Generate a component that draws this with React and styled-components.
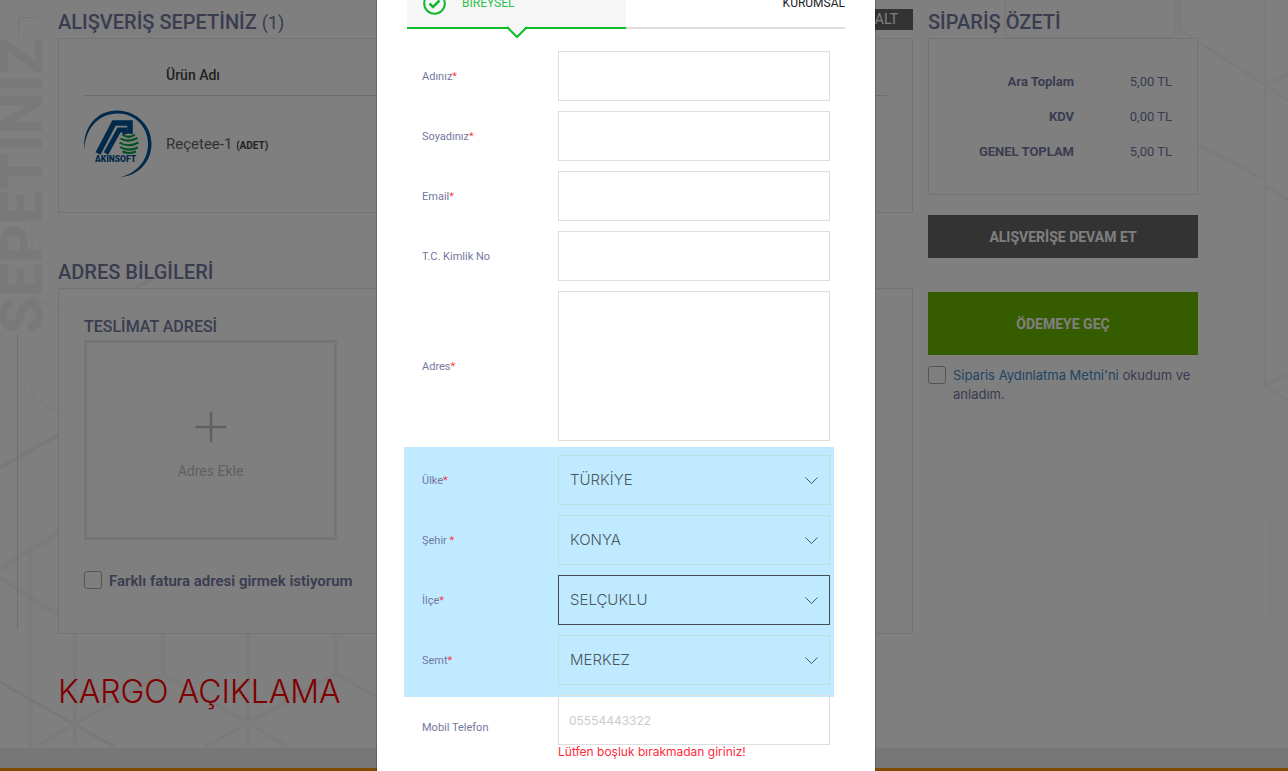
import React, { useState } from 'react'
import styled, { createGlobalStyle, css } from 'styled-components'

const titleFont = `Roboto, "Noto Sans", sans-serif`
const bodyFont = `Inter, "Open Sans", sans-serif`

const GlobalStyle = createGlobalStyle`
    *, *::before, *::after {
        box-sizing: border-box;
    }
    body {
        margin: 0;
        overflow: hidden;
        background: #fff;
        color: #7478a0;
        font-family: ${titleFont};
        font-size: 14px;
    }
    h2, h3, p {
        margin: 0;
    }
    button, input, select, textarea {
        font: inherit;
        border-radius: 0;
    }
`

/* ---------- page ---------- */

const Page = styled.div`
    position: relative;
    min-height: 100vh;
    padding-right: 32px;
    background: #fefefe;
`

const Pattern = styled.svg`
    position: absolute;
    top: 0;
    left: 0;
    width: 100%;
    height: 747px;
    fill: none;
    stroke: #f7f7f7;
`

const SideLabel = styled.div`
    position: absolute;
    top: 38px;
    left: -14px;
    writing-mode: vertical-rl;
    transform: rotate(180deg);
    color: #f3f3f3;
    font-size: 60px;
    line-height: 72px;
    font-weight: 800;
`

const SideCorner = styled.span`
    position: absolute;
    top: 17px;
    left: 18px;
    width: 20px;
    height: 20px;
    border: solid #ececec;
    border-width: 1px 0 0 1px;
`

const SideLine = styled.span`
    position: absolute;
    top: 334px;
    left: 17px;
    width: 1px;
    height: 296px;
    background: #dcdcdc;
`

const Container = styled.div`
    position: relative;
    display: grid;
    grid-template-columns: minmax(0, 1fr) 270px;
    gap: 15px;
    max-width: 1140px;
    margin: 0 auto;
`

const SectionHead = styled.div`
    display: flex;
    align-items: center;
    justify-content: space-between;
    height: 38px;
    margin-top: ${({ $spaced }) => ($spaced ? '37px' : '0')};
`

const SectionTitle = styled.h2`
    padding-top: 6px;
    font-size: 20px;
    line-height: 28px;
    font-weight: 500;

    span {
        font-size: 18px;
        font-weight: 400;
    }
`

const EmptyButton = styled.button`
    height: 21px;
    padding: 0 15px;
    border: 0;
    background: #666;
    color: #fff;
    line-height: 21px;
`

const Card = styled.section`
    padding: 25px;
    border: 1px solid #e6e6e6;
    background: #fff;
`

const ProductTable = styled.table`
    width: 100%;
    border-collapse: collapse;
    color: #666;
    text-align: left;

    th {
        height: 31px;
        padding: 0 0 8px;
        border-bottom: 1px solid #ddd;
        color: #444;
        font-weight: 500;
    }
    td {
        height: 92px;
        padding: 6px 0 0;
        font-size: 15px;
    }
    th:first-child, td:first-child {
        width: 82px;
    }
    small {
        color: #444;
        font-size: 10px;
        font-weight: 700;
    }
    svg {
        display: block;
    }
`

const AddressCard = styled(Card)`
    padding-bottom: 42px;
`

const AddressTitle = styled.h3`
    font-size: 16px;
    line-height: 26px;
    font-weight: 500;
`

const AddAddress = styled.button`
    display: flex;
    flex-direction: column;
    align-items: center;
    justify-content: center;
    gap: 18px;
    width: 253px;
    max-width: 100%;
    height: 200px;
    padding: 12px 0 0;
    border: 3px solid #ebebeb;
    background: transparent;
    color: #c2c2c2;
    line-height: 20px;
`

const CheckLabel = styled.label`
    display: flex;
    align-items: flex-start;
    gap: 7px;
    ${({ $billing }) =>
        $billing
            ? css`
                  margin-top: 31px;
                  font-size: 15px;
                  line-height: 20px;
                  font-weight: 600;
              `
            : css`
                  margin-top: 11px;
                  font-family: ${bodyFont};
                  font-size: 13px;
                  line-height: 19px;
              `}
    a {
        color: #428bca;
        text-decoration: none;
    }
`

const Check = styled.input`
    appearance: none;
    flex: none;
    width: 18px;
    height: 18px;
    margin: 0;
    border: 1px solid #a8a8a8;
    border-radius: 3px;
    background: #fff;
`

const CargoTitle = styled.p`
    margin: 38px 0 36px;
    color: #f00;
    font-family: ${bodyFont};
    font-size: 32px;
    line-height: 40px;
    font-weight: 300;
`

const SummaryTable = styled.table`
    width: 100%;
    border-collapse: collapse;
    font-size: 13px;
    text-align: right;

    th, td {
        height: 35px;
        padding: 0;
    }
    th {
        font-weight: 700;
    }
    td {
        width: 98px;
    }
`

const WideButton = styled.button`
    display: block;
    width: 100%;
    height: ${({ $primary }) => ($primary ? '63px' : '43px')};
    margin-top: ${({ $primary }) => ($primary ? '34px' : '20px')};
    border: 0;
    background: ${({ $primary }) => ($primary ? '#6cb800' : '#666')};
    color: #fff;
    font-weight: 700;
`

const Footer = styled.footer`
    position: relative;
    height: 60px;
    margin-right: -32px;
    border-top: 20px solid #eee;
    background: #ff9600;
`

/* ---------- modal ---------- */

const Overlay = styled.div`
    position: fixed;
    inset: 0;
    display: flex;
    justify-content: center;
    align-items: flex-start;
    padding-right: 36px;
    overflow: hidden;
    background: rgba(0, 0, 0, 0.5);
`

/* scrolled a little, so the head of the dialog is above the window */
const Dialog = styled.div`
    width: 500px;
    max-width: 100%;
    margin-top: -53px;
    padding: 29px 30px 60px;
    border: 1px solid rgba(0, 0, 0, 0.2);
    background: #fff;
    background-clip: padding-box;
`

const Tabs = styled.div`
    display: grid;
    grid-template-columns: 1fr 1fr;
`

const Tab = styled.button`
    position: relative;
    display: flex;
    align-items: center;
    justify-content: ${({ $active }) => ($active ? 'flex-start' : 'flex-end')};
    gap: 16px;
    height: 52px;
    padding: 2px 0 0 16px;
    border: 0;
    border-bottom: 2px solid ${({ $active }) => ($active ? '#0cbf2a' : '#ddd')};
    background: ${({ $active }) => ($active ? '#f6f6f6' : '#fff')};
    color: ${({ $active }) => ($active ? '#2dc24a' : '#222')};
    font-size: 12px;
`

const TabArrow = styled.svg`
    position: absolute;
    top: 49px;
    left: calc(50% - 11px);
`

const Form = styled.form`
    display: flex;
    flex-direction: column;
    gap: 10px;
    padding: 22px 15px 0;
`

const Row = styled.div`
    display: grid;
    grid-template-columns: 1fr 2fr;
    align-items: center;
`

const Label = styled.label`
    padding-top: 2px;
    font-size: 11px;
    line-height: 18px;

    span {
        color: #f00;
        font-weight: 300;
    }
`

const fieldStyle = css`
    display: block;
    width: 100%;
    height: 50px;
    padding: 0 10px;
    border: 1px solid #ddd;
    outline: 0;
    background: transparent;
    font-family: ${bodyFont};
`

const Input = styled.input`
    ${fieldStyle}
    font-size: 12px;

    &::placeholder {
        color: #ccc;
    }
`

const TextArea = styled.textarea`
    ${fieldStyle}
    height: 150px;
    resize: none;
`

const RegionGroup = styled.div`
    display: flex;
    flex-direction: column;
    gap: 10px;
    margin: -4px -4px -12px -18px;
    padding: 8px 4px 12px 18px;
    background: #bfeaff;
`

const SelectWrap = styled.div`
    position: relative;

    svg {
        position: absolute;
        top: 21px;
        right: 12px;
        pointer-events: none;
    }
`

const Select = styled.select`
    ${fieldStyle}
    appearance: none;
    padding: 0 11px 1px;
    border-color: ${({ $focused }) => ($focused ? '#444c50' : '#bbdfdc')};
    color: #4c565c;
    font-size: 15px;
    font-weight: 300;
`

const Hint = styled.p`
    color: #ff2a3a;
    font-family: ${bodyFont};
    font-size: 12px;
    line-height: 14px;
`

const Logo = () => (
    <svg width="68" height="68" viewBox="0 0 68 68" role="img" aria-label="AKINSOFT">
        <path
            d="M0.5 40 C-2 20 11 0.5 33 0.5 C52 0.5 67.5 15 67.5 34 C67.5 52 54 66 35 67.5 C52 64 64 51 64 34 C64 17 51 3.5 34 3.5 C15 3.5 1 18 0.5 40 Z"
            fill="#005294"
        />
        <g fill="none" stroke="#005294" strokeWidth="5">
            <path d="M14 43.5 L30 13 H46 V24" strokeWidth="5.500" />
            <path d="M22 43.5 L35 20 H41 V27" />
        </g>
        <circle cx="45" cy="33.5" r="10" fill="#fff" />
        <g fill="none" stroke="#00a045" strokeWidth="2">
            <path d="M39 25 Q45 29 51 24.5" />
            <path d="M36.5 28.5 Q44 33 53.5 28" />
            <path d="M35.5 32.5 Q44 38 54.5 32.5" />
            <path d="M36 37 Q44 42 54 37.5" />
            <path d="M38.5 41.5 Q45 44.500 52 41.5" />
        </g>
        <text x="11" y="52" fill="#005294" fontSize="8.500" fontWeight="900">
            AKINSOFT
        </text>
    </svg>
)

const Hexagons = () => (
    <Pattern strokeWidth="4" aria-hidden="true">
        <path d="M0 268 L90 220 L165 263 V290" strokeWidth="1" />
        <path d="M0 377 L60 414 M32 220 V400 M32 295 L60 312" strokeWidth="1.500" />
        <path d="M0 468 L60 434 M135 288 L160 275" stroke="#f2f2f2" />
        <path d="M0 569 L60 532 M0 578 L60 616 M30 545 V747" strokeWidth="5" />
        <path d="M0 682 L75 725 L115 747" stroke="#f0f0f0" strokeWidth="3" />
        <path d="M75 630 V747 M163 630 V674 L75 724 L35 747" />
        <path d="M163 674 L248 723 L288 747 M248 630 V747 M248 723 L335 674 V630 M248 723 L205 747 M335 674 L420 720" />
        <path d="M1005 0 V30 Q1005 37 1012 37 H1170 Q1176 37 1176 30 V0 M1180 0 V30 L1265 85 L1288 100" strokeWidth="3" />
        <path d="M1265 0 V85 V185 L1288 200 M1265 85 L1288 74 M1190 140 L1265 180 V386 L1288 400 M1265 386 L1288 374" strokeWidth="3" />
        <path d="M1270 520 V615 L1288 628 M1270 617 L1288 608" stroke="#fafafa" />
    </Pattern>
)

const Chevron = () => (
    <svg width="13" height="10" viewBox="0 0 13 10" fill="none" stroke="#4c565c">
        <path d="M0.5 1.5 L6.5 7.5 L12.5 1.5" />
    </svg>
)

const textFields = [
    { id: 'ad', label: 'Adınız', required: true },
    { id: 'soyad', label: 'Soyadınız', required: true },
    { id: 'email', label: 'Email', required: true, type: 'email' },
    { id: 'tc', label: 'T.C. Kimlik No' },
]

const regionFields = [
    { id: 'ulke', label: 'Ülke', value: 'TÜRKİYE' },
    { id: 'sehir', label: 'Şehir ', value: 'KONYA' },
    { id: 'ilce', label: 'İlçe', value: 'SELÇUKLU', focused: true },
    { id: 'semt', label: 'Semt', value: 'MERKEZ' },
]

const totals = [
    ['Ara Toplam', '5,00 TL'],
    ['KDV', '0,00 TL'],
    ['GENEL TOPLAM', '5,00 TL'],
]

const Cart = () => (
    <main>
        <SectionHead>
            <SectionTitle>
                ALIŞVERİŞ SEPETİNİZ <span>(1)</span>
            </SectionTitle>
            <EmptyButton type="button">SEPETİ BOŞALT</EmptyButton>
        </SectionHead>
        <Card>
            <ProductTable>
                <thead>
                    <tr>
                        <th aria-label="Ürün" />
                        <th>Ürün Adı</th>
                    </tr>
                </thead>
                <tbody>
                    <tr>
                        <td><Logo /></td>
                        <td>Reçetee-1 <small>(ADET)</small></td>
                    </tr>
                </tbody>
            </ProductTable>
        </Card>

        <SectionHead $spaced>
            <SectionTitle>ADRES BİLGİLERİ</SectionTitle>
        </SectionHead>
        <AddressCard>
            <AddressTitle>TESLİMAT ADRESİ</AddressTitle>
            <AddAddress type="button">
                <svg width="32" height="32" viewBox="0 0 32 32" stroke="#c2c2c2" strokeWidth="2.500">
                    <path d="M16 0.5 V31.5 M0.5 16 H31.5" />
                </svg>
                Adres Ekle
            </AddAddress>
            <CheckLabel $billing>
                <Check type="checkbox" />
                Farklı fatura adresi girmek istiyorum
            </CheckLabel>
        </AddressCard>
        <CargoTitle>KARGO AÇIKLAMA</CargoTitle>
    </main>
)

const Summary = () => (
    <aside>
        <SectionHead>
            <SectionTitle>SİPARİŞ ÖZETİ</SectionTitle>
        </SectionHead>
        <Card>
            <SummaryTable>
                <tbody>
                    {totals.map(([name, amount]) => (
                        <tr key={name}>
                            <th scope="row">{name}</th>
                            <td>{amount}</td>
                        </tr>
                    ))}
                </tbody>
            </SummaryTable>
        </Card>
        <WideButton type="button">ALIŞVERİŞE DEVAM ET</WideButton>
        <WideButton type="button" $primary>ÖDEMEYE GEÇ</WideButton>
        <CheckLabel>
            <Check type="checkbox" />
            <span>
                <a href="#metin">Siparis Aydınlatma Metni'ni</a> okudum ve anladım.
            </span>
        </CheckLabel>
    </aside>
)

const AddressDialog = () => {
    const [phone, setPhone] = useState('')

    return (
        <Overlay>
            <Dialog role="dialog" aria-label="Adres Ekle">
                <Tabs role="tablist">
                    <Tab type="button" role="tab" aria-selected="true" $active>
                        <svg width="23" height="23" viewBox="0 0 23 23" fill="none" stroke="#12b830" strokeWidth="2">
                            <circle cx="11.5" cy="11.5" r="10.3" />
                            <path d="M6.5 11.5 L10 15 L16.5 8.5" strokeWidth="2.500" />
                        </svg>
                        BİREYSEL
                        <TabArrow width="22" height="14" viewBox="0 0 22 14">
                            <path d="M1.5 0 L11 10.5 L20.5 0 Z" fill="#f6f6f6" />
                            <path d="M1 1 L11 11 L21 1" fill="none" stroke="#0cbf2a" strokeWidth="2" />
                        </TabArrow>
                    </Tab>
                    <Tab type="button" role="tab" aria-selected="false">KURUMSAL</Tab>
                </Tabs>
                <Form>
                    {textFields.map(({ id, label, required, type = 'text' }) => (
                        <Row key={id}>
                            <Label htmlFor={id}>{label}{required && <span>*</span>}</Label>
                            <Input id={id} type={type} />
                        </Row>
                    ))}
                    <Row>
                        <Label htmlFor="adres">Adres<span>*</span></Label>
                        <TextArea id="adres" />
                    </Row>
                    <RegionGroup>
                        {regionFields.map(({ id, label, value, focused }) => (
                            <Row key={id}>
                                <Label htmlFor={id}>{label}<span>*</span></Label>
                                <SelectWrap>
                                    <Select id={id} $focused={focused}>
                                        <option>{value}</option>
                                    </Select>
                                    <Chevron />
                                </SelectWrap>
                            </Row>
                        ))}
                    </RegionGroup>
                    <Row>
                        <Label htmlFor="telefon">Mobil Telefon</Label>
                        <div>
                            <Input
                                id="telefon"
                                type="tel"
                                placeholder="05554443322"
                                value={phone}
                                onChange={(e) => setPhone(e.target.value)}
                            />
                            <Hint>Lütfen boşluk bırakmadan giriniz!</Hint>
                        </div>
                    </Row>
                </Form>
            </Dialog>
        </Overlay>
    )
}

const App = () => (
    <>
        <GlobalStyle />
        <Page>
            <Hexagons />
            <SideLabel>SEPETİNİZ</SideLabel>
            <SideCorner />
            <SideLine />
            <Container>
                <Cart />
                <Summary />
            </Container>
            <Footer />
        </Page>
        <AddressDialog />
    </>
)

export default App
